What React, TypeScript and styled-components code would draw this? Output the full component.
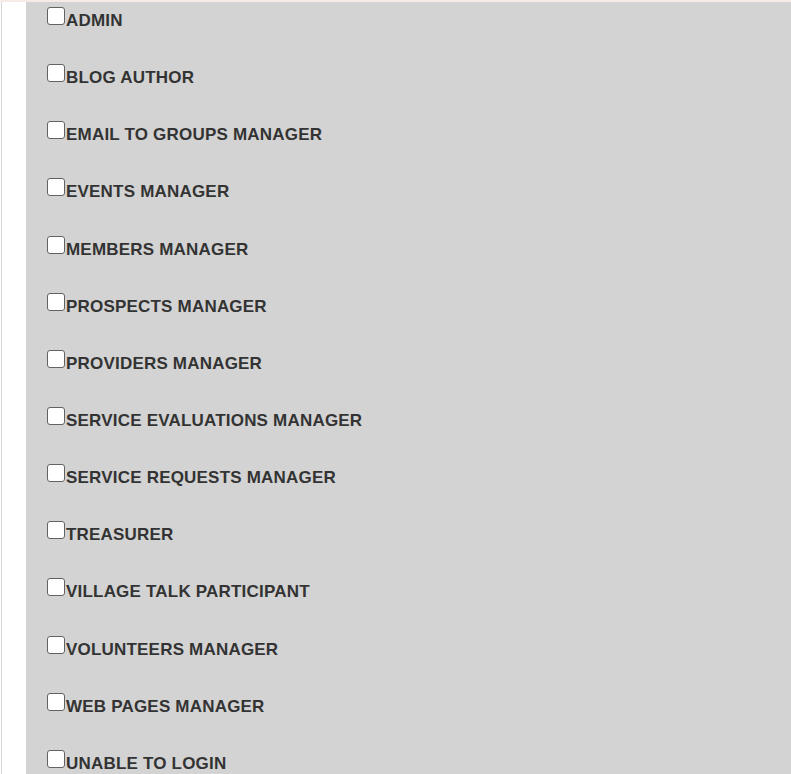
import React, { useState } from "react";
import styled, { createGlobalStyle } from "styled-components";

const GlobalStyle = createGlobalStyle`
  html, body {
    margin: 0;
    padding: 0;
    overflow: hidden;
    background: #ffffff;
  }
`;

const ROLES = [
  "ADMIN",
  "BLOG AUTHOR",
  "EMAIL TO GROUPS MANAGER",
  "EVENTS MANAGER",
  "MEMBERS MANAGER",
  "PROSPECTS MANAGER",
  "PROVIDERS MANAGER",
  "SERVICE EVALUATIONS MANAGER",
  "SERVICE REQUESTS MANAGER",
  "TREASURER",
  "VILLAGE TALK PARTICIPANT",
  "VOLUNTEERS MANAGER",
  "WEB PAGES MANAGER",
  "UNABLE TO LOGIN",
];

const Page = styled.div`
  height: 774px;
  overflow: hidden;
  border-top: 2px solid #f6ebe6;
  box-sizing: border-box;
  display: flex;
`;

const Gutter = styled.div`
  width: 24px;
  margin-left: 1px;
  border-left: 1px solid #d6d6d6;
  background: #ffffff;
  flex-shrink: 0;
`;

const RolePanel = styled.div`
  flex: 1;
  background: #d3d3d3;
  padding-left: 21px;
  display: flex;
  flex-direction: column;
`;

const RoleRow = styled.label`
  display: flex;
  align-items: flex-start;
  height: 57.15px;
  flex-shrink: 0;
  cursor: pointer;
`;

const RoleCheck = styled.input`
  appearance: none;
  -webkit-appearance: none;
  width: 18px;
  height: 18px;
  margin: 5px 1px 0 0;
  box-sizing: border-box;
  border: 1.5px solid #626262;
  border-radius: 3px;
  background: #ffffff;
  flex-shrink: 0;
  cursor: pointer;

  &:checked {
    background: #3b7dd8;
    border-color: #3b7dd8;
  }
`;

const RoleName = styled.span`
  margin-top: 9px;
  font-family: "Liberation Sans", Arial, sans-serif;
  font-size: 17px;
  font-weight: bold;
  line-height: 20px;
  letter-spacing: 0.2px;
  color: #333333;
  white-space: nowrap;
`;

export default function App() {
  const [checked, setChecked] = useState<Record<string, boolean>>({});

  return (
    <>
      <GlobalStyle />
      <Page>
        <Gutter />
        <RolePanel>
          {ROLES.map((role) => (
            <RoleRow key={role}>
              <RoleCheck
                type="checkbox"
                checked={!!checked[role]}
                onChange={() =>
                  setChecked((prev) => ({ ...prev, [role]: !prev[role] }))
                }
              />
              <RoleName>{role}</RoleName>
            </RoleRow>
          ))}
        </RolePanel>
      </Page>
    </>
  );
}
